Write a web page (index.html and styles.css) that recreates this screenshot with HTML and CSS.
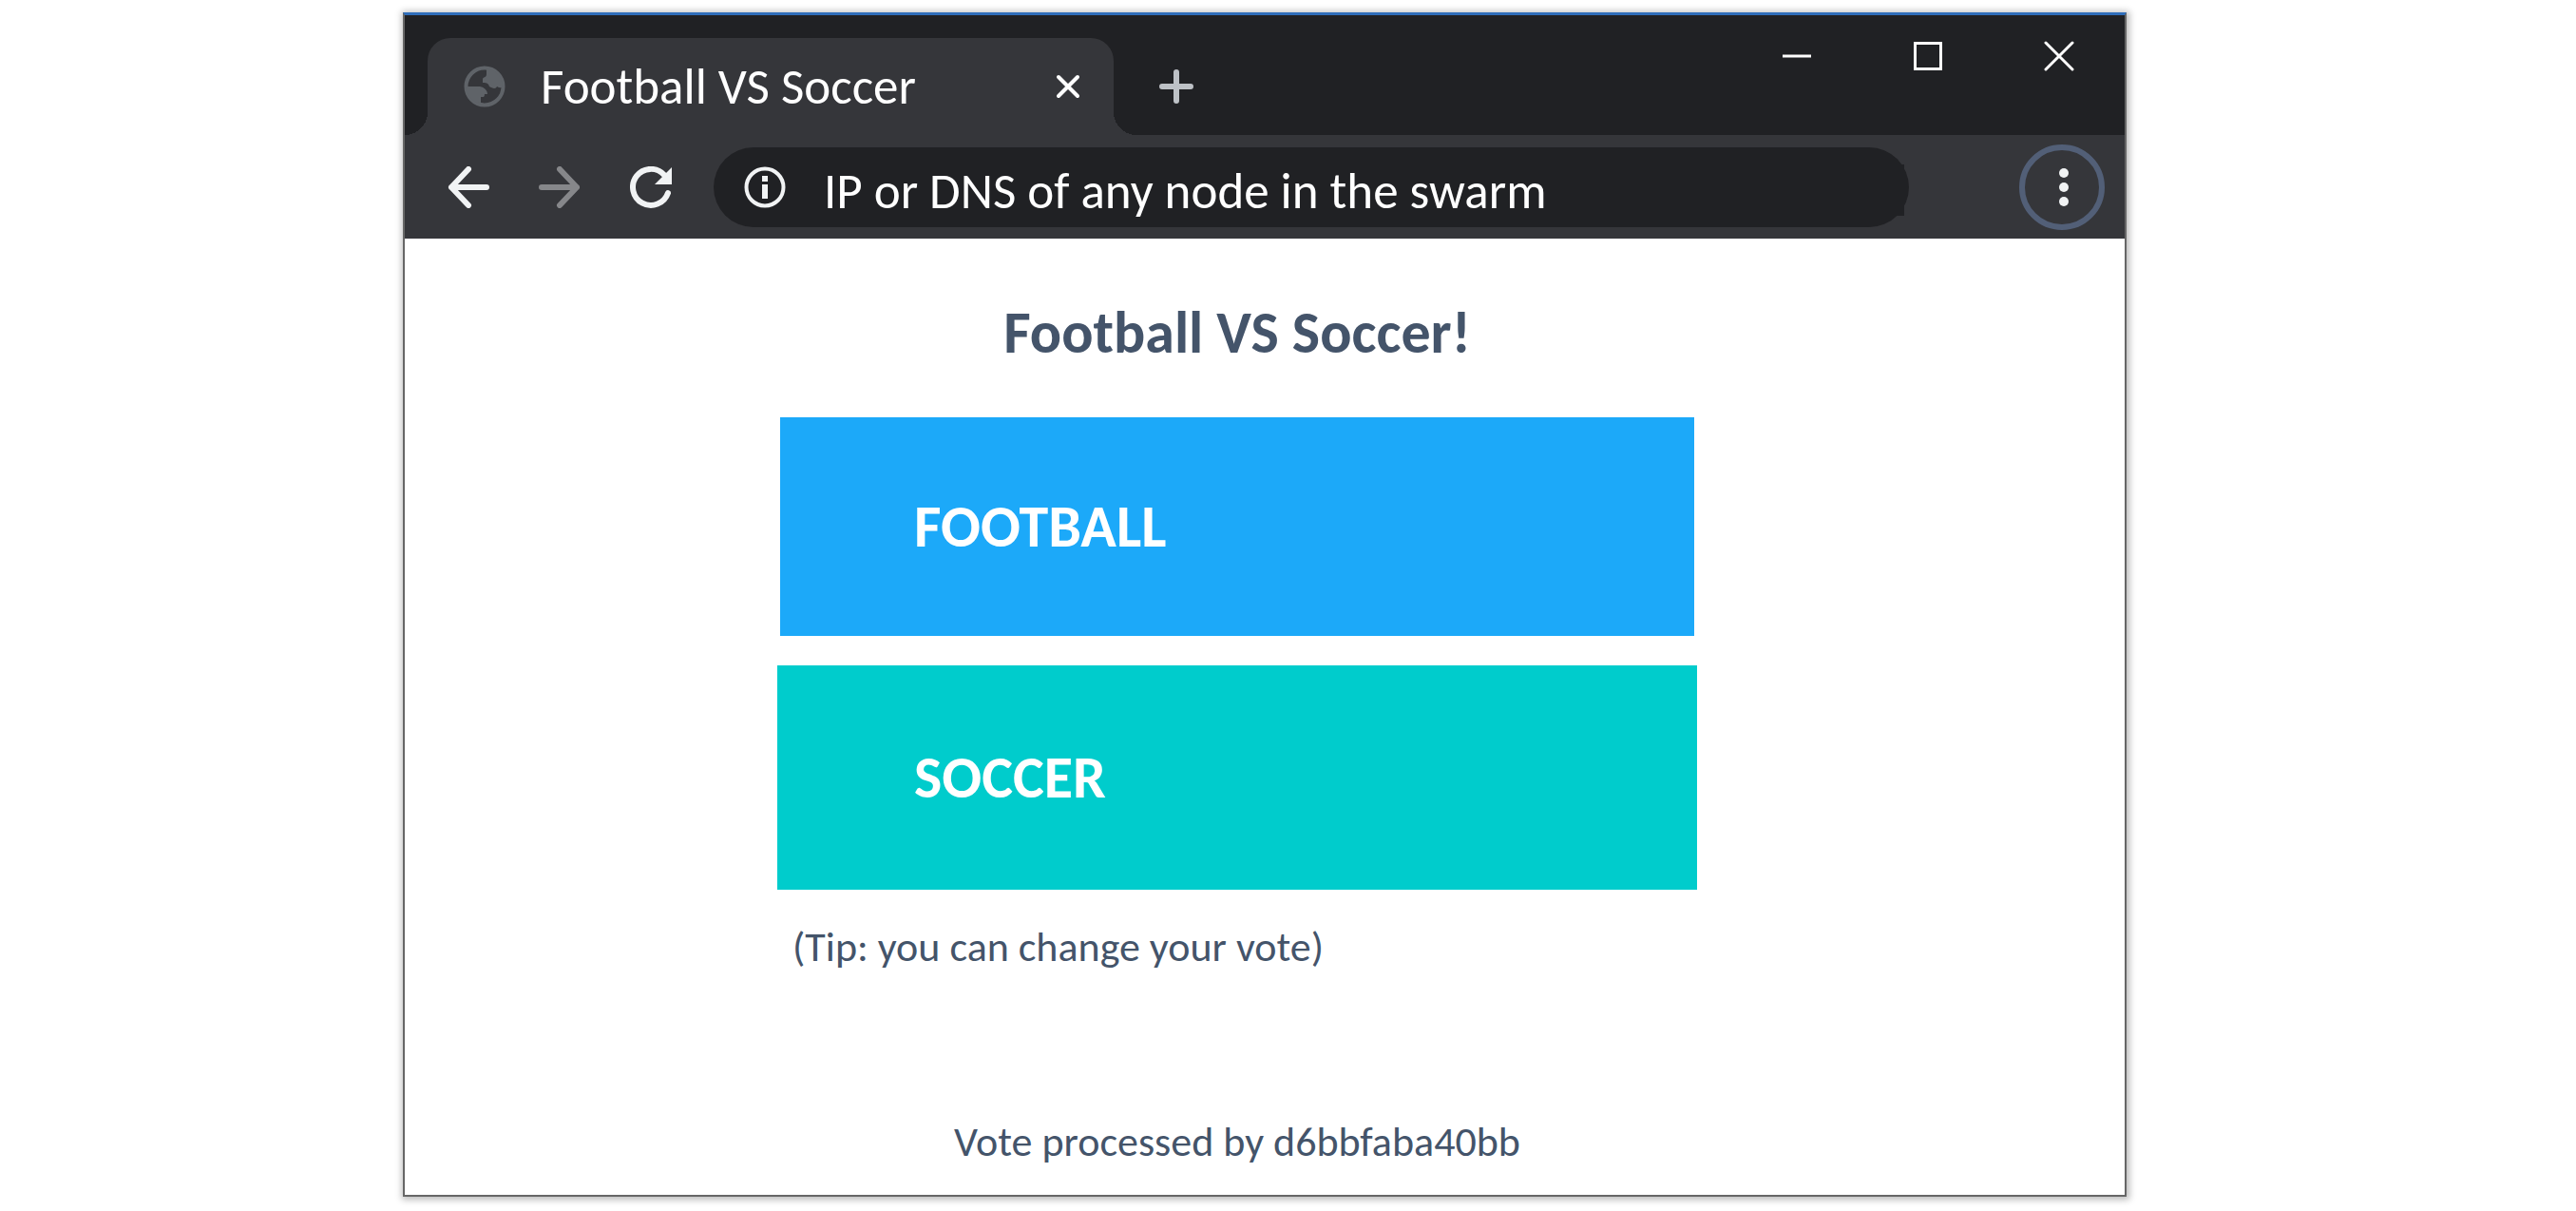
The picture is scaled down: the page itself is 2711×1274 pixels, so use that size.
FILE: index.html
```html
<!DOCTYPE html>
<html lang="en">
<head>
<meta charset="utf-8">
<title>Football VS Soccer</title>
<link rel="stylesheet" href="styles.css">
</head>
<body>
<div class="window">
  <header class="titlebar">
    <div class="tab">
      <svg class="icon" viewBox="0 0 44 44" aria-hidden="true">
        <circle cx="22" cy="22" r="19.500" fill="none" stroke="#5f6368" stroke-width="4"/>
        <path fill="#5f6368" d="M24 3C33 4 41 12 41 22C38 25 36 22 35 22C34 25 30 24 27 22C26 19 25 18 20 18V14C20 12 24 13 24 9Z"/>
        <path fill="#5f6368" d="M2 22H17C22 23 25 26 25 30H22C22 34 20 33 18 33V39C12 40 3 32 2 22Z"/>
      </svg>
      <span class="tab-title">Football VS Soccer</span>
      <button class="plain" aria-label="Close tab">
        <svg width="26" height="26" viewBox="0 0 26 26"><path d="M3 3L23 23M23 3L3 23" stroke="#fff" stroke-width="4" stroke-linecap="round"/></svg>
      </button>
    </div>
    <button class="plain new-tab" aria-label="New tab">
      <svg width="36" height="36" viewBox="0 0 36 36"><path d="M18 3V33M3 18H33" stroke="#bdc1c6" stroke-width="6" stroke-linecap="round"/></svg>
    </button>
    <div class="controls">
      <button class="plain" aria-label="Minimize"><svg width="32" height="32" viewBox="0 0 32 32"><path d="M1 16H31" stroke="#fff" stroke-width="3"/></svg></button>
      <button class="plain" aria-label="Maximize"><svg width="32" height="32" viewBox="0 0 32 32"><rect x="2.500" y="2.500" width="27" height="27" fill="none" stroke="#fff" stroke-width="3"/></svg></button>
      <button class="plain" aria-label="Close"><svg width="32" height="32" viewBox="0 0 32 32"><path d="M2 2L30 30M30 2L2 30" stroke="#fff" stroke-width="3" stroke-linecap="round"/></svg></button>
    </div>
  </header>
  <nav class="toolbar">
    <button class="plain" aria-label="Back"><svg class="icon" viewBox="0 0 44 44"><path d="M22 3L4 22L22 41M4 22H41" fill="none" stroke="#f1f3f4" stroke-width="6" stroke-linecap="round" stroke-linejoin="round"/></svg></button>
    <button class="plain" aria-label="Forward"><svg class="icon" viewBox="0 0 44 44"><path d="M22 3L40 22L22 41M40 22H3" fill="none" stroke="#86878a" stroke-width="6" stroke-linecap="round" stroke-linejoin="round"/></svg></button>
    <button class="plain" aria-label="Reload"><svg class="icon" viewBox="0 0 44 44"><path d="M36 9A19 19 0 1 0 40 28" fill="none" stroke="#f1f3f4" stroke-width="6" stroke-linecap="round"/><path d="M44 1V19H26Z" fill="#f1f3f4"/></svg></button>
    <label class="address">
      <svg class="icon" viewBox="0 0 44 44" aria-hidden="true"><circle cx="22" cy="22" r="19.500" fill="none" stroke="#f1f3f4" stroke-width="4"/><path d="M19 10H25V16H19ZM19 19H25V34H19Z" fill="#f1f3f4"/></svg>
      <input type="text" aria-label="Address" value="IP or DNS of any node in the swarm">
    </label>
    <button class="plain menu" aria-label="Menu"><svg width="10" height="42" viewBox="0 0 10 42"><g fill="#f1f3f4"><circle cx="5" cy="6" r="5"/><circle cx="5" cy="21" r="5"/><circle cx="5" cy="36" r="5"/></g></svg></button>
  </nav>
  <main class="page">
    <h1>Football VS Soccer!</h1>
    <form class="choices">
      <button type="button" class="choice football">FOOTBALL</button>
      <button type="button" class="choice soccer">SOCCER</button>
      <p class="tip">(Tip: you can change your vote)</p>
    </form>
    <p class="processed">Vote processed by d6bbfaba40bb</p>
  </main>
</div>
</body>
</html>
```
FILE: styles.css
```css
* {
  box-sizing: border-box;
}

body {
  margin: 0;
  padding: 13px 473px 16px 424px;
  background: #fff;
  color: #44546a;
  font-family: Carlito, Lato, sans-serif;
  font-size: 44px;
  line-height: 48px;
}

svg {
  display: block;
  flex: none;
}

.window {
  border: 2px solid #666;
  border-top: 3px solid #2f6eba;
  box-shadow: 1px 1px 7px 2px rgba(0, 0, 0, 0.28);
}

.icon {
  width: 44px;
  height: 44px;
}

.plain {
  display: flex;
  flex: none;
  align-items: center;
  justify-content: center;
  padding: 0;
  border: 0;
  background: none;
}

.titlebar {
  display: flex;
  height: 126px;
  padding: 24px 53px 0 24px;
  background: #202124;
}

.tab {
  position: relative;
  display: flex;
  align-items: center;
  width: 722px;
  padding: 0 35px 0 38px;
  border-radius: 24px 24px 0 0;
  background: #35363a;
  color: #fff;
}

/* Flared feet that join the tab to the toolbar */
.tab::before,
.tab::after {
  content: "";
  position: absolute;
  bottom: 0;
  width: 24px;
  height: 24px;
}

.tab::before {
  right: 100%;
  background: radial-gradient(circle at 0 0, #202124 24px, #35363a 24px);
}

.tab::after {
  left: 100%;
  background: radial-gradient(circle at 100% 0, #202124 24px, #35363a 24px);
}

.tab-title {
  flex: 1;
  padding-left: 37px;
  font-size: 53px;
}

.new-tab {
  margin-left: 48px;
}

.controls {
  display: flex;
  gap: 106px;
  align-items: flex-start;
  margin-left: auto;
  padding-top: 3px;
}

.toolbar {
  display: flex;
  gap: 52px;
  align-items: center;
  height: 109px;
  padding: 0 21px 0 45px;
  background: #35363a;
}

.address {
  position: relative;
  display: flex;
  flex: 1;
  align-items: center;
  gap: 40px;
  height: 84px;
  margin: 0 64px 0 -8px;
  padding: 0 32px;
  border-radius: 42px;
  background: #202124;
}

/* Squared-off patch at the right end of the field */
.address::after {
  content: "";
  position: absolute;
  top: 18px;
  right: 5px;
  width: 20px;
  height: 54px;
  background: #202124;
}

.address input {
  flex: 1;
  min-width: 0;
  padding: 8px 0 0;
  border: 0;
  background: none;
  color: #fff;
  font: inherit;
  font-size: 53px;
}

.menu {
  width: 90px;
  height: 90px;
  padding-left: 3px;
  border: 6px solid #525f77;
  border-radius: 50%;
}

.page {
  display: flex;
  flex-direction: column;
  align-items: center;
  padding: 67px 58px 32px 0;
}

h1 {
  margin: 0;
  font-size: 62px;
  line-height: 64px;
}

.choices {
  display: flex;
  flex-direction: column;
  width: 100%;
  max-width: 968px;
  padding-top: 57px;
}

.choice {
  padding: 80px 144px;
  border: 0;
  color: #fff;
  font: inherit;
  font-size: 62px;
  font-weight: bold;
  line-height: 70px;
  text-align: left;
}

.football {
  margin: 0 3px 31px;
  padding-inline: 141px;
  background: #1ca9f9;
}

.soccer {
  padding-block: 83px;
  background: #00cccc;
}

.tip,
.processed {
  margin: 0;
}

.tip {
  padding: 36px 16px 0;
}

.processed {
  padding-top: 157px;
}
```
